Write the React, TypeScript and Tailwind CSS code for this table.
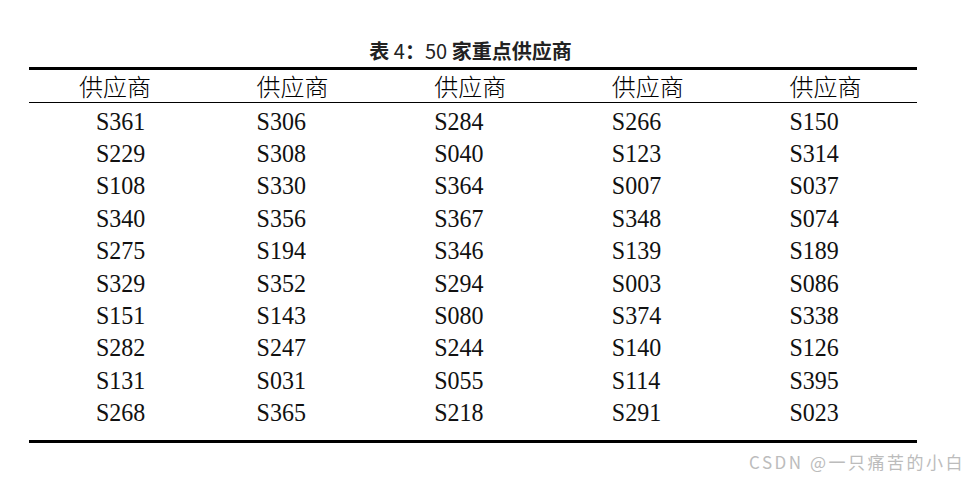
const rows = [
  ['S361', 'S306', 'S284', 'S266', 'S150'],
  ['S229', 'S308', 'S040', 'S123', 'S314'],
  ['S108', 'S330', 'S364', 'S007', 'S037'],
  ['S340', 'S356', 'S367', 'S348', 'S074'],
  ['S275', 'S194', 'S346', 'S139', 'S189'],
  ['S329', 'S352', 'S294', 'S003', 'S086'],
  ['S151', 'S143', 'S080', 'S374', 'S338'],
  ['S282', 'S247', 'S244', 'S140', 'S126'],
  ['S131', 'S031', 'S055', 'S114', 'S395'],
  ['S268', 'S365', 'S218', 'S291', 'S023'],
]

export default function App() {
  return (
    <div className="w-[975px] h-[480px] bg-white pt-[39px] overflow-hidden">
      <div className="ml-[29px] w-[888px]">
        <div className="text-center text-[20px] leading-[24px] font-bold text-[#222] mb-[4px] pr-[5px]" style={{ fontFamily: '"Noto Sans CJK SC", sans-serif' }}>
          表 <span className="font-normal">4</span>：<span className="font-normal">50</span> 家重点供应商
        </div>
        <div className="border-t-[3px] border-black" />
        <div className="grid grid-cols-5 h-[32px] items-center text-[24px] leading-none text-black" style={{ fontFamily: '"Noto Sans CJK SC", sans-serif' }}>
          {[0, 1, 2, 3, 4].map(i => (
            <div key={i} className="pl-[50px] font-light">供应商</div>
          ))}
        </div>
        <div className="border-t border-black" />
        <div className="pb-[13px]">
          {rows.map((r, ri) => (
            <div key={ri} className="grid grid-cols-5 h-[32.4px] items-center text-[24px] leading-none text-[#111]" style={{ fontFamily: '"Liberation Serif", serif' }}>
              {r.map((c, ci) => (
                <div key={ci} className={ci === 0 ? 'pl-[67px] pt-[3px]' : 'pl-[50px] pt-[3px]'}>
                  <span className="inline-block scale-y-[1.08]">{c}</span>
                </div>
              ))}
            </div>
          ))}
        </div>
        <div className="border-t-[3px] border-black" />
      </div>
      <div className="mt-[8px] text-right pr-[10px] text-[17px] leading-[22px] tracking-[2.5px] text-[#bcbcbc]" style={{ fontFamily: '"Noto Sans CJK SC", sans-serif' }}>
        CSDN @一只痛苦的小白
      </div>
    </div>
  )
}
